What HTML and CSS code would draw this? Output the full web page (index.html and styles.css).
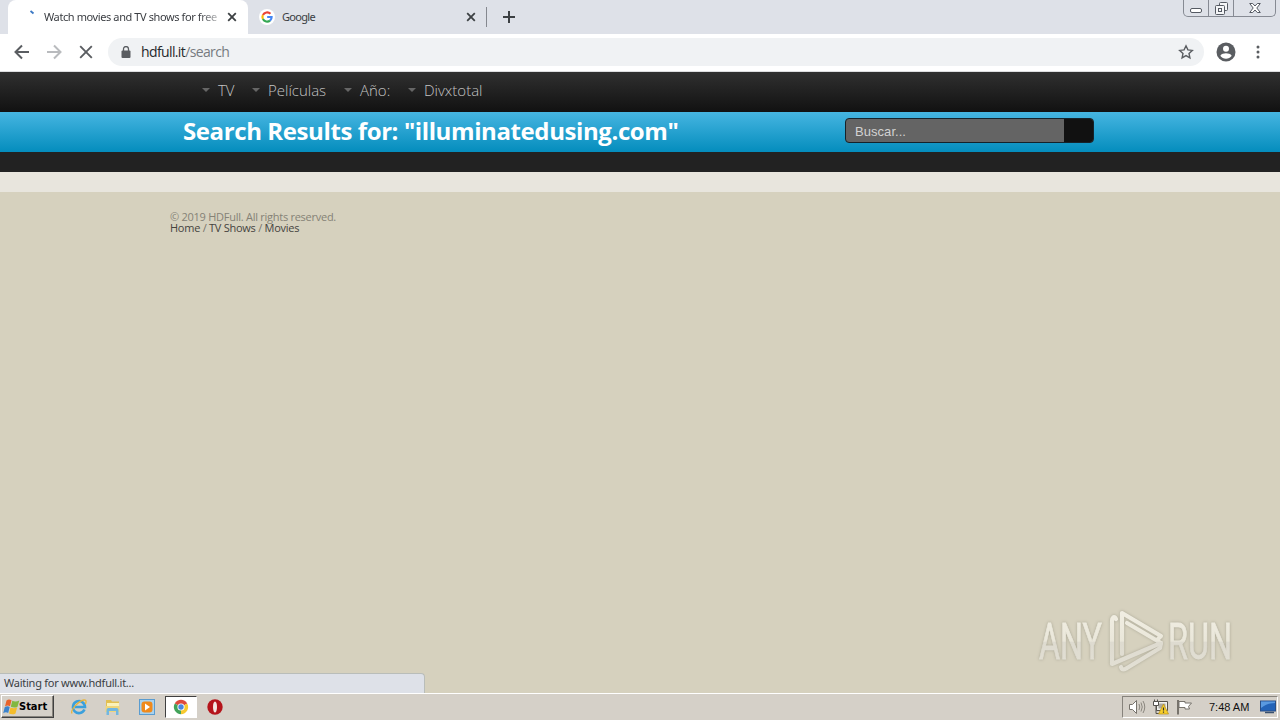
FILE: index.html
```html
<!DOCTYPE html>
<html lang="en">
<head>
    <meta charset="UTF-8">
    <title>Watch movies and TV shows for free</title>
    <link rel="stylesheet" href="styles.css">
</head>
<body>
    <div class="tabstrip">
        <div class="tab active">
            <svg class="spinner" width="16" height="16" viewBox="0 0 16 16"><path d="M5.500 2l3 2.500" stroke="#3b78c4" stroke-width="1.800"/></svg>
            <span class="tabtitle fade">Watch movies and TV shows for free</span>
            <svg class="close" width="10" height="10" viewBox="0 0 10 10"><path d="M1.200 1.200l7.600 7.600M8.800 1.200L1.200 8.800" stroke="#3c4043" stroke-width="1.800"/></svg>
        </div>
        <div class="tab">
            <svg class="favicon" width="16" height="16" viewBox="0 0 18 18">
                <circle cx="9" cy="9" r="9" fill="#fff"/>
                <g fill="none" stroke-width="2.400">
                    <path d="M12.900 5.400A5.300 5.300 0 0 0 4.400 6.800" stroke="#ea4335"/>
                    <path d="M4.400 6.800a5 5 0 0 0 0 4.400" stroke="#fbbc05"/>
                    <path d="M4.400 11.200a5.300 5.300 0 0 0 8 1.800" stroke="#34a853"/>
                    <path d="M12.400 13A5 5 0 0 0 14.200 9H9.200" stroke="#4285f4"/>
                </g>
            </svg>
            <span class="tabtitle">Google</span>
            <svg class="close" width="10" height="10" viewBox="0 0 10 10"><path d="M1.200 1.200l7.600 7.600M8.800 1.200L1.200 8.800" stroke="#3c4043" stroke-width="1.800"/></svg>
        </div>
        <div class="divider"></div>
        <svg class="plus" width="12" height="12" viewBox="0 0 12 12"><path d="M6 0v12M0 6h12" stroke="#3c4043" stroke-width="2"/></svg>
        <div class="winbtns">
            <div class="min"><svg width="12" height="5" viewBox="0 0 12 5"><rect x=".5" y=".5" width="11" height="4" rx="1.500" fill="#fff" stroke="#555a63"/></svg></div>
            <div class="max"><svg width="13" height="13" viewBox="0 0 13 13" fill="#f4f5f7" stroke="#555a63"><rect x="4.500" y=".5" width="8" height="8" rx="1"/><rect x=".5" y="3.500" width="9" height="9" rx="1"/><rect x="3.500" y="6.500" width="3" height="3"/></svg></div>
            <div class="cls"><svg width="12" height="10" viewBox="0 0 12 10"><path d="M.7.5h3L6 3 8.300.5h3L7.800 5l3.500 4.500h-3L6 7 3.700 9.500h-3L4.200 5z" fill="#fff" stroke="#555a63"/></svg></div>
        </div>
    </div>

    <div class="toolbar">
        <svg width="16" height="16" viewBox="0 0 16 16"><path d="M15 8H2M8 1.500L1.500 8 8 14.500" fill="none" stroke="#5a5d61" stroke-width="2"/></svg>
        <svg width="16" height="16" viewBox="0 0 16 16"><path d="M1 8h13M8 1.500L14.500 8 8 14.500" fill="none" stroke="#b9bbbe" stroke-width="2"/></svg>
        <svg width="16" height="16" viewBox="0 0 16 16"><path d="M2.200 2.200l11.600 11.600M13.800 2.200L2.200 13.800" stroke="#5a5d61" stroke-width="1.900"/></svg>
        <div class="omnibox">
            <svg width="10" height="12" viewBox="0 0 10 12"><rect x=".5" y="4.500" width="9" height="7.500" rx="1" fill="#5a5d61"/><path d="M2.500 5V3a2.500 2.500 0 0 1 5 0v2" fill="none" stroke="#5a5d61" stroke-width="1.300"/></svg>
            <span class="url">hdfull.it<span class="path">/search</span></span>
            <svg class="star" width="16" height="16" viewBox="0 0 16 16"><path d="M8 1.800l1.900 4.100 4.400.5L11 9.400l.9 4.500L8 11.600l-3.900 2.300.9-4.500-3.300-3 4.400-.5z" fill="none" stroke="#5a5d61" stroke-width="1.400"/></svg>
        </div>
        <svg class="avatar" width="20" height="20" viewBox="0 0 20 20"><circle cx="10" cy="10" r="9.500" fill="#5a5d61"/><circle cx="10" cy="6.800" r="3" fill="#fff"/><path d="M4.300 13.800C5.300 12 8 11.300 10 11.300s4.700.7 5.700 2.500a7 7 0 0 1-11.400 0z" fill="#fff"/></svg>
        <svg class="dots" width="4" height="14" viewBox="0 0 4 14" fill="#5a5d61"><circle cx="2" cy="2" r="1.500"/><circle cx="2" cy="7" r="1.500"/><circle cx="2" cy="12" r="1.500"/></svg>
    </div>

    <div class="page">
        <div class="nav">
            <a class="item tv">TV</a>
            <a class="item pel">Películas</a>
            <a class="item year">Año:</a>
            <a class="item divx">Divxtotal</a>
        </div>
        <div class="searchbar">
            <h1>Search Results for: "illuminatedusing.com"</h1>
            <div class="search">
                <span class="input">Buscar...</span>
                <span class="go"></span>
            </div>
        </div>
        <div class="dark"></div>
        <div class="light"></div>
        <div class="footer">
            <div class="copy">© 2019 HDFull. All rights reserved.</div>
            <div class="links"><a>Home</a> / <a>TV Shows</a> / <a>Movies</a></div>
        </div>

        <div class="status">Waiting for www.hdfull.it...</div>

        <svg class="watermark" width="210" height="70" viewBox="0 0 210 70">
            <defs>
                <linearGradient id="wm" x1="0" y1="0" x2="0" y2="70" gradientUnits="userSpaceOnUse">
                    <stop offset="0" stop-color="#f2efe4"/>
                    <stop offset=".5" stop-color="#eae7da"/>
                    <stop offset=".52" stop-color="#dedbd0"/>
                    <stop offset="1" stop-color="#e4e1d5"/>
                </linearGradient>
            </defs>
            <g fill="url(#wm)" stroke="url(#wm)" stroke-width=".8">
                <text x="9" y="53" textLength="63" lengthAdjust="spacingAndGlyphs">ANY</text>
                <text x="138" y="53" textLength="64" lengthAdjust="spacingAndGlyphs">RUN</text>
            </g>
            <g fill="none" stroke="url(#wm)" stroke-width="4.200" stroke-linejoin="round" stroke-linecap="round">
                <path d="M92 48V7l39 23-3 3"/>
                <path d="M86 13c-2-4-4-1-4 2v43l49-21-34-20"/>
                <path d="M91 61c1 4 4 2 6 1l33-20 1-5"/>
            </g>
        </svg>
    </div>

    <div class="taskbar">
        <div class="start">
            <svg width="17" height="16" viewBox="0 0 17 16">
                <path d="M3.500 1.500C5.500 0 7 .5 8.500 1.300L7 7.200C5.500 6.400 4 6.200 2 7.400z" fill="#e8632a"/>
                <path d="M9.300 1.700c2 1 4.500 1 7-.2L14.500 7.700c-2 1.200-4.500 1-6.700 0z" fill="#82b840"/>
                <path d="M1.700 8.200c2-1.200 3.500-1 5-.2l-1.500 6c-1.500-.8-3-1-5 .2z" fill="#3b83cc"/>
                <path d="M7.500 8.500c2 1 4.500 1 6.700-.2l-1.700 6.200c-2 1.200-4.500 1-6.500 0z" fill="#f4bc2a"/>
            </svg>
            <span>Start</span>
        </div>
        <div class="quick">
            <!-- internet explorer -->
            <svg width="18" height="18" viewBox="0 0 18 18" fill="none"><path d="M14.500 11.500A6 6 0 1 1 15 9H5" stroke="#3ba0dc" stroke-width="2.600"/><path d="M2 15.500C0 12 9 2.500 14 2c3-.3 2 3 1.300 4" stroke="#e8b43a" stroke-width="1.300"/></svg>
            <!-- explorer -->
            <svg width="18" height="18" viewBox="0 0 18 18"><path d="M2 2h5l1 1.500h7V14H2z" fill="#e2bf50"/><path d="M3 5h12v4H3z" fill="#fbf2b8"/><path d="M1.500 8h14v6h-14z" fill="#efd67a"/><path d="M2.500 17v-5q0-2 2-2h8q2 0 2 2v5H12v-4H5v4z" fill="#72b7e0"/></svg>
            <!-- media player -->
            <svg width="18" height="18" viewBox="0 0 18 18"><rect x="1.500" y="1.500" width="15" height="15" fill="#a9d2ee" stroke="#5a9cd0"/><rect x="3.500" y="3.500" width="11" height="11" rx="3" fill="#f08a1c"/><path d="M7 5.500l5 3.500-5 3.500z" fill="#fff"/></svg>
            <!-- chrome -->
            <div class="running">
                <svg width="16" height="16" viewBox="0 0 16 16"><path d="M8 8L1.800 4.400A7.200 7.200 0 0 1 14.200 4.400z" fill="#de4a3c"/><path d="M8 8l6.200-3.600A7.200 7.200 0 0 1 8 15.200z" fill="#f7c92f"/><path d="M8 8v7.200A7.200 7.200 0 0 1 1.800 4.400z" fill="#42a35a"/><circle cx="8" cy="8" r="3.600" fill="#fff"/><circle cx="8" cy="8" r="2.700" fill="#4a86e0"/></svg>
            </div>
            <!-- opera -->
            <svg width="18" height="18" viewBox="0 0 18 18"><circle cx="9" cy="9" r="7.700" fill="#b5141b"/><ellipse cx="9" cy="9" rx="2" ry="5.500" fill="#f4e7e2"/></svg>
        </div>
        <div class="tray">
            <svg class="vol" width="18" height="16" viewBox="0 0 18 16"><path d="M1.500 5.500h3l4-4v13l-4-4h-3z" fill="#fff" stroke="#77736c"/><path d="M11 5q1.500 3 0 6M13 3.500q2.500 4.500 0 9M15 2q3.500 6 0 12" fill="none" stroke="#8b877f"/></svg>
            <svg class="net" width="18" height="16" viewBox="0 0 18 16"><path d="M4.500 2.500h11v9h-11z" fill="#f2f2ee" stroke="#55524d"/><path d="M6.500 4.500h7v5h-7z" fill="#aaa8a2"/><path d="M1.500 2.500h5v4h-5z" fill="#fff" stroke="#55524d"/><path d="M2.500.5v2M5.500.5v2M4 6.500v8h4" fill="none" stroke="#55524d"/><path d="M11.500 5l5 10h-10z" fill="#f8cf2b" stroke="#b98f14" stroke-width=".7"/><path d="M11.500 8.500v3M11.500 12.500v1.300" stroke="#333" stroke-width="1.200"/></svg>
            <svg class="flag" width="17" height="16" viewBox="0 0 17 16"><path d="M2 1v14.500" stroke="#77736c" stroke-width="2"/><path d="M3 2.500h6v1.500h6.500l-3 3.500 1 2.500H9V8.500H3z" fill="#fff" stroke="#77736c"/></svg>
            <span class="clock">7:48 AM</span>
            <svg class="desk" width="16" height="14" viewBox="0 0 16 14"><rect x=".5" y="1" width="15" height="10" fill="#2464b8" stroke="#2a4f86"/><path d="M1 8q6-5 14-5V1.500H1z" fill="#5a9ae0"/><path d="M5 12.500h9" stroke="#39506f" stroke-width="1.500"/></svg>
        </div>
    </div>
</body>
</html>
```

FILE: styles.css
```css
*{
    box-sizing: border-box;
}
body{
    margin: 0;
    width: 1280px;
    height: 720px;
    overflow: hidden;
    display: flex;
    flex-direction: column;
    font-family: "DejaVu Sans Condensed", "Open Sans", sans-serif;
    background-color: #d6d1be;
}
svg{
    display: block;
    flex: none;
}

/* browser */
.tabstrip{
    height: 34px;
    flex: none;
    display: flex;
    align-items: center;
    padding-left: 8px;
    background-color: #dee1e8;
}
.tab{
    width: 239px;
    height: 34px;
    display: flex;
    align-items: center;
    padding: 0 11px;
    color: #3a3d42;
    font-family: "Noto Sans", sans-serif;
    font-size: 11px;
}
.tab.active{
    width: 240px;
    padding-left: 17px;
    background-color: #fff;
    border-radius: 8px 8px 0 0;
}
.tabtitle{
    flex: 1;
    margin: 0 9px 0 7px;
    padding-bottom: 2px;
    white-space: nowrap;
    overflow: hidden;
    letter-spacing: -0.7px;
}
.fade{
    margin: 0 7px 0 3px;
    letter-spacing: -0.4px;
    -webkit-mask-image: linear-gradient(to right, #000 88%, transparent 104%);
}
.divider{
    width: 1px;
    height: 20px;
    background-color: #85888f;
    margin-left: -1px;
}
.favicon{
    margin-left: 0;
}
.plus{
    margin-left: 16px;
}
.winbtns{
    display: flex;
    align-self: flex-start;
    margin: 0 4px 0 auto;
    height: 17px;
    border: 1px solid #868a93;
    border-top: 0;
    border-radius: 0 0 5px 5px;
}
.winbtns div{
    display: flex;
    justify-content: center;
    align-items: center;
    width: 25px;
    border-right: 1px solid #868a93;
}
.winbtns .min{
    padding-top: 4px;
}
.winbtns .cls{
    width: 41px;
    border-right: 0;
}
.toolbar{
    height: 38px;
    flex: none;
    display: flex;
    align-items: center;
    gap: 16px;
    padding: 0 0 2px 14px;
    background-color: #fff;
    border-bottom: 1px solid #dcdddf;
}
.omnibox{
    width: 1096px;
    height: 28px;
    margin-left: -2px;
    margin-right: -4px;
    display: flex;
    align-items: center;
    padding: 0 10px 0 13px;
    border-radius: 14px;
    background-color: #f0f2f4;
}
.url{
    margin-left: 10px;
    font-family: "Open Sans", sans-serif;
    font-size: 14px;
    letter-spacing: -0.62px;
    color: #26282b;
}
.path{
    color: #777b80;
}
.star{
    margin-left: auto;
}
.dots{
    margin-left: 4px;
}

/* site */
.page{
    position: relative;
    height: 621px;
    flex: none;
    background-color: #d6d1be;
}
.nav{
    height: 40px;
    display: flex;
    align-items: center;
    padding: 0 0 4px 202px;
    background: linear-gradient(#303030, #111);
    font-family: "Open Sans", sans-serif;
    font-size: 15px;
    font-weight: 300;
    color: #c4c4c4;
}
.item{
    display: flex;
    align-items: center;
    white-space: nowrap;
}
.item::before{
    content: "";
    border: 4px solid transparent;
    border-top-color: #666;
    border-bottom: 0;
    margin-right: 8px;
}
.tv{
    width: 50px;
}
.pel{
    width: 92px;
}
.year{
    width: 64px;
}
.searchbar{
    height: 40px;
    display: flex;
    justify-content: space-between;
    align-items: center;
    padding: 0 186px 0 183px;
    background: linear-gradient(#46b5e1, #048dbd);
}
h1{
    margin: 0;
    font-family: "Open Sans", sans-serif;
    font-size: 24px;
    letter-spacing: -0.4px;
    line-height: 38px;
    padding-bottom: 2px;
    font-weight: bold;
    color: #fff;
    white-space: nowrap;
}
.search{
    width: 249px;
    height: 25px;
    margin-bottom: 3px;
    display: flex;
    border: 1px solid #15222a;
    border-radius: 4px;
    background-color: #646464;
    overflow: hidden;
}
.input{
    flex: 1;
    padding-left: 9px;
    font-family: "Liberation Sans", sans-serif;
    font-size: 13px;
    line-height: 25px;
    letter-spacing: 0.05px;
    color: #d2d2d2;
}
.go{
    width: 29px;
    background-color: #111;
}
.dark{
    height: 20px;
    background-color: #222;
}
.light{
    height: 20px;
    background-color: #e8e5dd;
}
.footer{
    padding: 19px 170px;
    font-family: "Open Sans", sans-serif;
    font-size: 11px;
    letter-spacing: -0.26px;
    line-height: 11px;
    color: #858276;
}
.links{
    color: #77746a;
}
.links a{
    color: #45433e;
}
.status{
    position: absolute;
    left: 0;
    bottom: 0;
    width: 425px;
    height: 20px;
    padding-left: 4px;
    border: 1px solid #b9bdb9;
    border-left: 0;
    border-bottom: 0;
    border-radius: 0 4px 0 0;
    background-color: #dee1e8;
    font-family: "Noto Sans", sans-serif;
    font-size: 11px;
    letter-spacing: -0.25px;
    line-height: 17px;
    color: #3a3d42;
}
.watermark{
    position: absolute;
    right: 40px;
    bottom: 17px;
    filter: drop-shadow(0 0 1.5px #a9a695);
}
.watermark text{
    font-family: "Roboto", sans-serif;
    font-size: 50px;
}

/* windows taskbar */
.taskbar{
    height: 27px;
    flex: none;
    display: flex;
    align-items: center;
    padding: 0 2px 1px 1px;
    border-top: 1px solid #fff;
    background-color: #d5d0c8;
}
.start{
    width: 53px;
    height: 23px;
    display: flex;
    align-items: center;
    padding-left: 1px;
    border: 1px solid;
    border-color: #fff #404040 #404040 #fff;
    box-shadow: inset -1px -1px #87837c;
    font-size: 11px;
    font-weight: bold;
    color: #000;
}
.start span{
    margin-left: -1px;
    padding-bottom: 1px;
}
.quick{
    display: flex;
    align-items: center;
    margin-left: 16px;
    gap: 16px;
}
.running{
    width: 32px;
    height: 22px;
    margin: 0 -7px 0 -7px;
    display: flex;
    justify-content: center;
    align-items: center;
    border: 1px solid;
    border-color: #404040 #fff #fff #404040;
    background-color: #fff;
}
.tray{
    width: 156px;
    height: 22px;
    margin-left: auto;
    display: flex;
    align-items: center;
    padding-left: 5px;
    border: 1px solid;
    border-color: #87837c #fff #fff #87837c;
}
.net, .flag{
    margin-left: 6px;
}
.clock{
    margin-left: 16px;
    width: 50px;
    font-family: "Liberation Sans", sans-serif;
    font-size: 11px;
    white-space: nowrap;
    color: #111;
}
.desk{
    margin-left: 1px;
}
```
